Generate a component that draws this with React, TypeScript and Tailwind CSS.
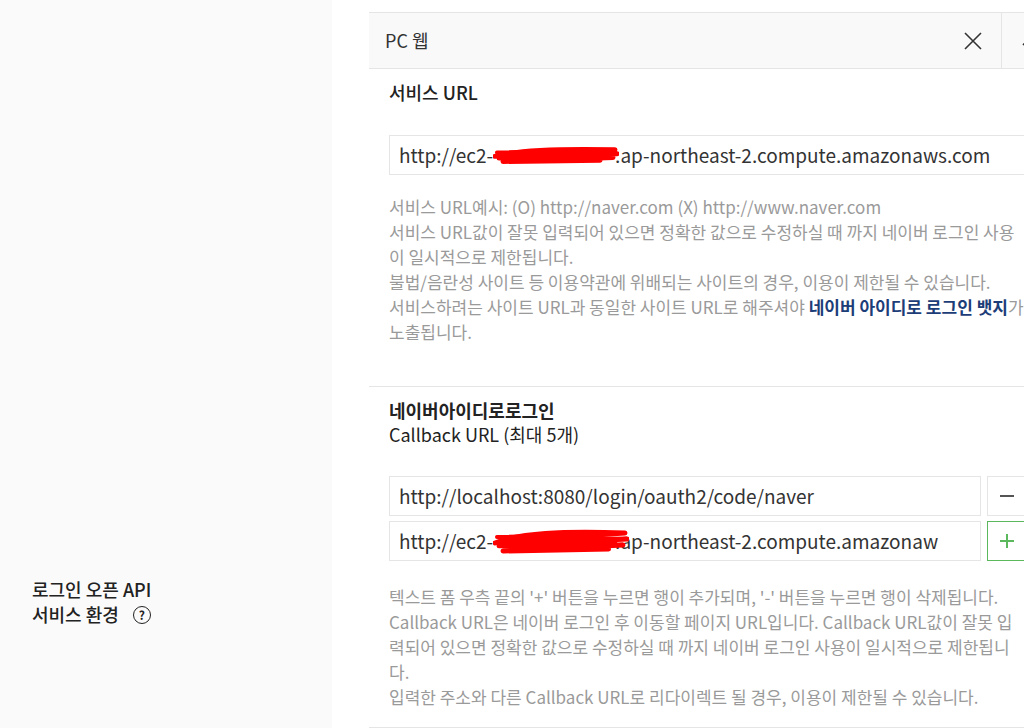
import React from "react";

const font = "font-['Noto_Sans_CJK_KR','Noto_Sans',sans-serif]";

function Scribble({ w, h }: { w: number; h: number }) {
  // red marker redaction drawn over the hidden part of the address
  return (
    <svg
      width={w}
      height={h}
      viewBox={`0 0 ${w} ${h}`}
      className="pointer-events-none absolute left-0 top-1/2 -translate-y-1/2"
      fill="none"
      stroke="#ff0000"
      strokeLinecap="round"
      strokeLinejoin="round"
    >
      <path
        d={`M2 ${h * 0.55} C ${w * 0.2} ${h * 0.3}, ${w * 0.5} ${h * 0.25}, ${w - 4} ${h * 0.3} L 8 ${h * 0.5} L ${w - 2} ${h * 0.45} L 6 ${h * 0.62} L ${w - 6} ${h * 0.6} L 10 ${h * 0.75} L ${w * 0.85} ${h * 0.7}`}
        strokeWidth={5}
      />
      <path d={`M4 ${h * 0.4} L ${w * 0.7} ${h * 0.35} L 12 ${h * 0.58} L ${w * 0.9} ${h * 0.55}`} strokeWidth={4} />
    </svg>
  );
}

function HelpLines({ lines }: { lines: React.ReactNode[] }) {
  return (
    <div className="whitespace-nowrap text-[17px] leading-[25px] text-[#9a9a9a]">
      {lines.map((l, i) => (
        <div key={i}>{l}</div>
      ))}
    </div>
  );
}

function UrlBox({ children, className = "" }: { children: React.ReactNode; className?: string }) {
  return (
    <div
      className={`flex h-[40px] items-center whitespace-nowrap border border-[#e5e5e5] bg-white pl-[9px] text-[19px] text-[#333] ${className}`}
    >
      {children}
    </div>
  );
}

export default function App() {
  return (
    <div className={`flex h-[728px] w-[1024px] overflow-hidden bg-white ${font}`}>
      <aside className="w-[332px] shrink-0 bg-[#fafafa] pl-8 pt-[577px] text-[18px] font-medium leading-[25px] text-[#222]">
        <div>로그인 오픈 API</div>
        <div className="flex items-center gap-[14px]">
          서비스 환경
          <span className="flex h-[18px] w-[18px] items-center justify-center rounded-full border-[1.5px] border-[#222] text-[12px] font-bold leading-none">
            ?
          </span>
        </div>
      </aside>

      <main className="min-w-0 flex-1 pl-[37px] pt-3">
        <section className="w-[688px] border-t border-[#e5e5e5]">
          <header className="flex h-[56px] items-center justify-between border-b border-[#e5e5e5] bg-[#f9f9f9] pl-4 text-[18px] text-[#333]">
            <span>PC 웹</span>
            <div className="flex h-full">
              <button className="flex w-[56px] items-center justify-center">
                <svg width="20" height="20" viewBox="0 0 20 20" stroke="#333" strokeWidth="1.6">
                  <path d="M2 2 L18 18 M18 2 L2 18" />
                </svg>
              </button>
              <button className="flex w-[56px] items-center justify-center border-l border-[#e5e5e5]">
                <svg width="16" height="10" viewBox="0 0 16 10" fill="none" stroke="#333" strokeWidth="1.6">
                  <path d="M1 9 L8 2 L15 9" />
                </svg>
              </button>
            </div>
          </header>

          <div className="border-b border-[#e5e5e5] pb-[42px] pl-5 pr-[30px] pt-[12px]">
            <h3 className="text-[18px] font-medium leading-[22px] text-[#222]">서비스 URL</h3>
            <UrlBox className="mt-[32px]">
              http://ec2-
              <span className="relative inline-block h-[26px] w-[122px]">
                <Scribble w={126} h={26} />
              </span>
              .ap-northeast-2.compute.amazonaws.com
            </UrlBox>
            <div className="mt-[19px]">
              <HelpLines
                lines={[
                  "서비스 URL예시: (O) http://naver.com (X) http://www.naver.com",
                  "서비스 URL값이 잘못 입력되어 있으면 정확한 값으로 수정하실 때 까지 네이버 로그인 사용",
                  "이 일시적으로 제한됩니다.",
                  "불법/음란성 사이트 등 이용약관에 위배되는 사이트의 경우, 이용이 제한될 수 있습니다.",
                  <>
                    서비스하려는 사이트 URL과 동일한 사이트 URL로 해주셔야{" "}
                    <b className="font-bold text-[#1c3d78]">네이버 아이디로 로그인 뱃지</b>가
                  </>,
                  "노출됩니다.",
                ]}
              />
            </div>
          </div>

          <div className="border-b border-[#e5e5e5] pb-[18px] pl-5 pr-[30px] pt-[11px]">
            <div className="text-[18px] leading-[24px] text-[#222]">
              <h3 className="font-bold">네이버아이디로로그인</h3>
              <p>Callback URL (최대 5개)</p>
            </div>
            <div className="mt-[30px] flex flex-col gap-[5px]">
              <div className="flex gap-[6px]">
                <UrlBox className="flex-1">http://localhost:8080/login/oauth2/code/naver</UrlBox>
                <button className="flex h-[40px] w-[40px] items-center justify-center border border-[#e5e5e5] bg-white">
                  <span className="h-[2px] w-[14px] bg-[#555]" />
                </button>
              </div>
              <div className="flex gap-[6px]">
                <UrlBox className="flex-1">
                  http://ec2-
                  <span className="relative inline-block h-[40px] w-[122px]">
                    <Scribble w={136} h={40} />
                  </span>
                  .ap-northeast-2.compute.amazonaw
                </UrlBox>
                <button className="flex h-[40px] w-[40px] items-center justify-center border border-[#5cb85c] bg-white">
                  <svg width="16" height="16" viewBox="0 0 16 16" stroke="#5cb85c" strokeWidth="2">
                    <path d="M8 1 V15 M1 8 H15" />
                  </svg>
                </button>
              </div>
            </div>
            <div className="mt-[23px]">
              <HelpLines
                lines={[
                  "텍스트 폼 우측 끝의 '+' 버튼을 누르면 행이 추가되며, '-' 버튼을 누르면 행이 삭제됩니다.",
                  "Callback URL은 네이버 로그인 후 이동할 페이지 URL입니다. Callback URL값이 잘못 입",
                  "력되어 있으면 정확한 값으로 수정하실 때 까지 네이버 로그인 사용이 일시적으로 제한됩니",
                  "다.",
                  "입력한 주소와 다른 Callback URL로 리다이렉트 될 경우, 이용이 제한될 수 있습니다.",
                ]}
              />
            </div>
          </div>
        </section>
      </main>
    </div>
  );
}
